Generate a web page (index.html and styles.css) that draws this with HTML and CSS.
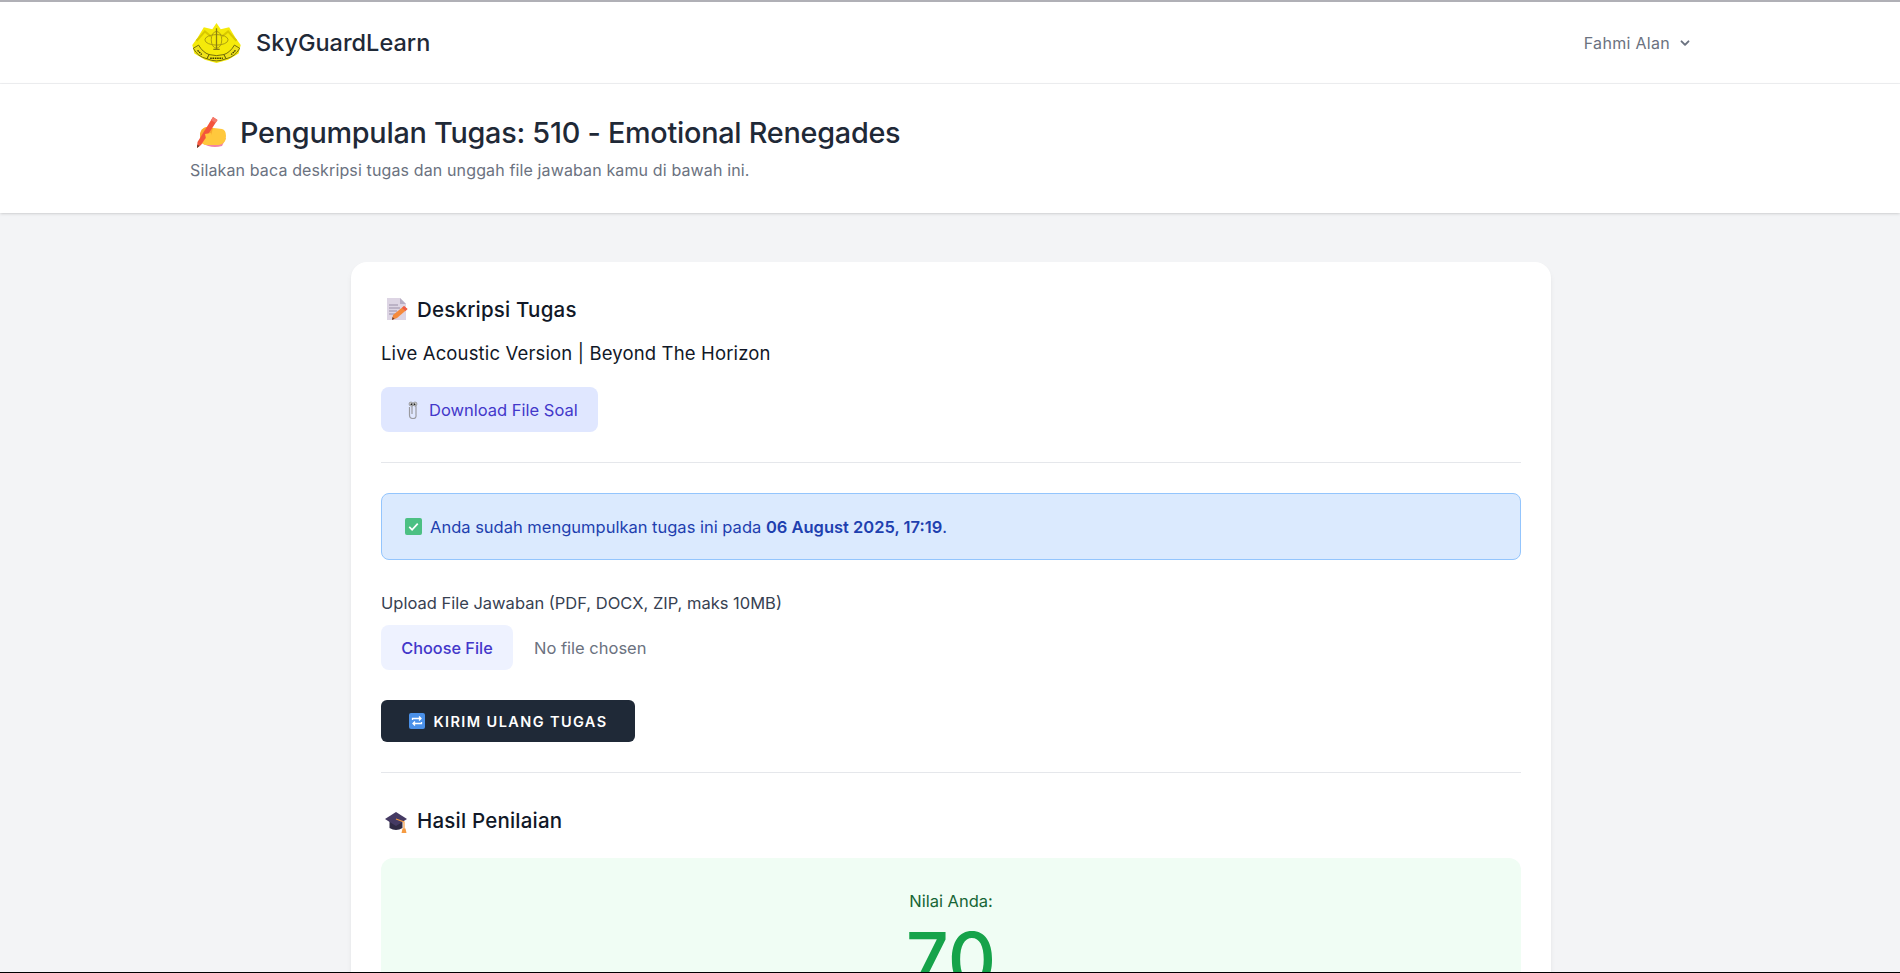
FILE: index.html
```html
<!DOCTYPE html>
<html lang="id">
<head>
<meta charset="utf-8">
<title>SkyGuardLearn</title>
<link rel="stylesheet" href="styles.css">
</head>
<body>
<div class="page">
  <nav class="nav">
    <div class="nav-inner">
      <a class="brand">
        <svg class="logo" viewBox="2 1 46 38">
          <path d="M25 1l4 6 8-2 6 10 5 7-2 8-10 6-11 3-11-3-10-6-2-8 5-7 6-10 8 2z" fill="#f5ea0a"/>
          <path d="M6 18l8-9 6 5M44 18l-8-9-6 5" fill="none" stroke="#d8c800" stroke-width="2"/>
          <ellipse cx="25" cy="17" rx="11" ry="5" fill="none" stroke="#a89a10" stroke-width=".9"/>
          <ellipse cx="25" cy="17" rx="5" ry="8" fill="none" stroke="#a89a10" stroke-width=".9"/>
          <path d="M25 6v20M22 26h6" stroke="#8a7d10" stroke-width="1.200"/>
          <path d="M3 25q4 8 13 10l2-4q-6-2-10-9zM47 25q-4 8-13 10l-2-4q6-2 10-9z" fill="#eee21a" stroke="#4a4408" stroke-width=".7"/>
          <path d="M16 35q9 4 18 0l-2-4q-7 2-14 0z" fill="#f0e40e" stroke="#4a4408" stroke-width=".7"/>
          <path d="M19 34.500h12M7 27l4 4M43 27l-4 4" stroke="#3a3606" stroke-width="1.300" stroke-dasharray="1.500 .7"/>
        </svg>
        <span class="brand-name">SkyGuardLearn</span>
      </a>
      <button class="user">
        <span>Fahmi Alan</span>
        <svg class="chev" viewBox="0 0 20 20"><path d="M4.800 7.100a1.200 1.200 0 0 1 1.700 0L10 10.500l3.500-3.400a1.200 1.200 0 1 1 1.700 1.700l-4.300 4.300a1.200 1.200 0 0 1-1.700 0L4.800 8.800a1.200 1.200 0 0 1 0-1.700z" fill="currentColor"/></svg>
      </button>
    </div>
  </nav>
  <header class="header">
    <div class="header-inner">
      <h1 class="title">
        <svg class="emoji-title" viewBox="0 0 36 36">
          <path d="M12 28q9 6 20 3l4-8-22 1z" fill="#f283a5"/>
          <path d="M10 19q1-6 7-7l7 1 8 1q4 1 4 7 0 8-7 9H17q-6 0-7-6z" fill="#ffc83d"/>
          <path d="M10 19q1-6 7-7l6 1-2 8q-5 4-11 3z" fill="#f9a72e"/>
          <path d="M23 2l4.500 3L11 30l-4 3 .500-6z" fill="#f4543c"/>
          <path d="M23 2l4.500 3-2 3-4.500-3z" fill="#f47a6c"/>
          <path d="M7 33l.300-3.500 2.200 1.500z" fill="#5b3a2a"/>
          <path d="M15 19l6-1 2 7-6 3z" fill="#ffc83d"/>
        </svg>
        <span>Pengumpulan Tugas: 510 - Emotional Renegades</span>
      </h1>
      <p class="subtitle">Silakan baca deskripsi tugas dan unggah file jawaban kamu di bawah ini.</p>
    </div>
  </header>
  <main class="main">
    <section class="card">
      <h2 class="section-title">
        <svg class="emoji-h2" viewBox="0 0 24 24">
          <path d="M2 0h13l6 6v16H2z" fill="#ddd5e4"/>
          <path d="M15 0l6 6h-6z" fill="#b8aec4"/>
          <path d="M4 7h9M4 10h11M4 13h8M4 16h6" stroke="#9a8fa8" stroke-width="1"/>
          <path d="M19 8l3.500 3L12 20l-5 2 1-5z" fill="#f58a3c"/>
          <path d="M19 8l3.500 3-2 2-3.500-3z" fill="#ef5d4b"/>
          <path d="M7 22l.500-3 2 1.800z" fill="#6b4030"/>
        </svg>
        <span>Deskripsi Tugas</span>
      </h2>
      <p class="desc">Live Acoustic Version | Beyond The Horizon</p>
      <a class="download">
        <svg class="emoji-clip" viewBox="0 0 14 18">
          <path d="M3.500 6v8q0 3.500 3.500 3.500t3-3.500V6q0-2-2-2T6 6v7" fill="none" stroke="#9a9aa0" stroke-width="1.200"/>
          <circle cx="5" cy="3" r="1.900" fill="#fff" stroke="#555" stroke-width=".6"/>
          <circle cx="9" cy="3" r="1.900" fill="#fff" stroke="#555" stroke-width=".6"/>
          <circle cx="5.300" cy="3.200" r=".9" fill="#222"/>
          <circle cx="8.700" cy="3.200" r=".9" fill="#222"/>
        </svg>
        <span>Download File Soal</span>
      </a>
      <hr class="rule rule-top">
      <div class="notice">
        <svg class="emoji-check" viewBox="0 0 18 18">
          <rect width="18" height="18" rx="2" fill="#4cc083"/>
          <path d="M4.500 9.500l3 3 6-6.500" fill="none" stroke="#fff" stroke-width="1.800"/>
        </svg>
        <span>Anda sudah mengumpulkan tugas ini pada <strong>06 August 2025, 17:19</strong>.</span>
      </div>
      <form class="upload">
        <label class="upload-label">Upload File Jawaban (PDF, DOCX, ZIP, maks 10MB)</label>
        <div class="file-row">
          <span class="file-btn">Choose File</span>
          <span class="file-name">No file chosen</span>
        </div>
        <button class="submit" type="button">
          <svg class="emoji-repeat" viewBox="0 0 16 16">
            <rect width="16" height="16" rx="2" fill="#4a90e8"/>
            <path d="M3.500 7V5.500h8M10 3.500l2 2-2 2M12.500 9v1.500h-8M6 12.500l-2-2 2-2" fill="none" stroke="#fff" stroke-width="1.300"/>
          </svg>
          <span>KIRIM ULANG TUGAS</span>
        </button>
      </form>
      <hr class="rule rule-mid">
      <h2 class="section-title">
        <svg class="emoji-h2" viewBox="0 0 24 24">
          <path d="M4.500 12v7q6.500 4 13 0v-7z" fill="#2f2a44"/>
          <path d="M0 10l11-7 11 7-11 7z" fill="#453a63"/>
          <path d="M11 10l8 3v7" fill="none" stroke="#f59b42" stroke-width="1.200"/>
          <path d="M17.500 19.500h3l1 4.500h-5z" fill="#f59b42"/>
        </svg>
        <span>Hasil Penilaian</span>
      </h2>
      <div class="grade">
        <p class="grade-label">Nilai Anda:</p>
        <p class="grade-value">70</p>
      </div>
    </section>
  </main>
  <div class="edge"></div>
</div>
</body>
</html>
```
FILE: styles.css
```css
* { box-sizing: border-box; }
html, body { margin: 0; padding: 0; height: 973px; overflow: hidden; }
body { font-family: "Inter", "Liberation Sans", sans-serif; background: #f3f4f6; color: #111827; }
.page { position: relative; height: 973px; overflow: hidden; border-top: 2px solid #b0b0b6; }
.edge { position: absolute; left: 0; right: 0; bottom: 0; height: 1px; background: #000; }

.nav { background: #fff; border-bottom: 1px solid #f0f1f3; height: 82px; }
.nav-inner { padding: 0 207px 0 192px; height: 100%; display: flex; align-items: center; justify-content: space-between; }
.brand { display: flex; align-items: center; gap: 15px; }
.logo { width: 49px; height: 40px; display: block; }
.brand-name { font-size: 23.500px; font-weight: 500; color: #1f2937; }
.user { display: flex; align-items: center; gap: 7px; border: 0; background: none; padding: 0; font: inherit; font-size: 16px; letter-spacing: .3px; color: #6b7280; }
.chev { width: 16px; height: 16px; }

.header { background: #fff; height: 129px; box-shadow: 0 1px 3px rgba(0,0,0,.12), 0 1px 2px -1px rgba(0,0,0,.1); }
.header-inner { padding: 31px 190px 0; }
.title { margin: 0; display: flex; align-items: center; gap: 14px; font-size: 28.800px; font-weight: 500; line-height: 36px; color: #1f2937; letter-spacing: -.25px; }
.emoji-title { width: 36px; height: 36px; flex: none; }
.subtitle { margin: 7px 0 0; font-size: 16px; line-height: 24px; letter-spacing: .13px; color: #6b7280; }

.main { padding: 49px 0 0 2px; display: flex; justify-content: center; }
.card { width: 1200px; height: 900px; background: #fff; border-radius: 16px; padding: 34px 30px 30px; box-shadow: 0 4px 6px -1px rgba(0,0,0,.08), 0 2px 4px -2px rgba(0,0,0,.06); }
.section-title { margin: 0; display: flex; align-items: center; gap: 8px; padding-left: 4px; font-size: 20.500px; font-weight: 500; line-height: 28px; letter-spacing: .2px; color: #111827; }
.emoji-h2 { width: 24px; height: 24px; flex: none; }
.desc { margin: 15px 0 0; font-size: 18.500px; line-height: 28px; letter-spacing: .15px; color: #111827; }
.download { margin-top: 20px; display: inline-flex; align-items: center; gap: 9px; width: 217px; height: 45px; padding-left: 25px; background: #e0e7ff; border-radius: 8px; font-size: 16.500px; color: #4338ca; }
.emoji-clip { width: 14px; height: 18px; }
.rule { border: 0; border-top: 1px solid #e5e7eb; margin: 0; }
.rule-top { margin-top: 30px; }
.notice { margin-top: 30px; height: 67px; display: flex; align-items: center; gap: 8px; padding-left: 23px; background: #dbeafe; border: 1px solid #93c5fd; border-radius: 8px; font-size: 16.500px; color: #1e40af; }
.notice strong { font-weight: 600; }
.emoji-check { width: 17px; height: 17px; flex: none; }
.upload { margin-top: 31px; }
.upload-label { display: block; font-size: 16.500px; line-height: 24px; color: #374151; }
.file-row { margin-top: 10px; display: flex; align-items: center; gap: 20px; }
.file-btn { width: 132px; height: 45px; display: flex; align-items: center; justify-content: center; background: #eef2ff; border-radius: 8px; font-size: 16.300px; font-weight: 500; color: #4338ca; }
.file-name { font-size: 16.500px; margin-left: 1px; color: #6b7280; }
.submit { margin-top: 30px; display: flex; align-items: center; justify-content: center; gap: 9px; width: 254px; height: 42px; padding-bottom: 1px; background: #1f2937; border: 0; border-radius: 6px; color: #fff; font: inherit; font-size: 14.500px; font-weight: 600; letter-spacing: 1.400px; }
.emoji-repeat { width: 16px; height: 16px; }
.rule-mid { margin-top: 30px; }
.rule-mid + .section-title { margin-top: 34px; }
.grade { margin-top: 23px; height: 200px; padding-top: 31px; background: #f0fdf4; border-radius: 12px; text-align: center; }
.grade-label { margin: 0; font-size: 16.500px; line-height: 24px; color: #166534; }
.grade-value { margin: 9px 0 0; font-size: 75px; line-height: 75px; font-weight: 550; color: #16a34a; }
```
